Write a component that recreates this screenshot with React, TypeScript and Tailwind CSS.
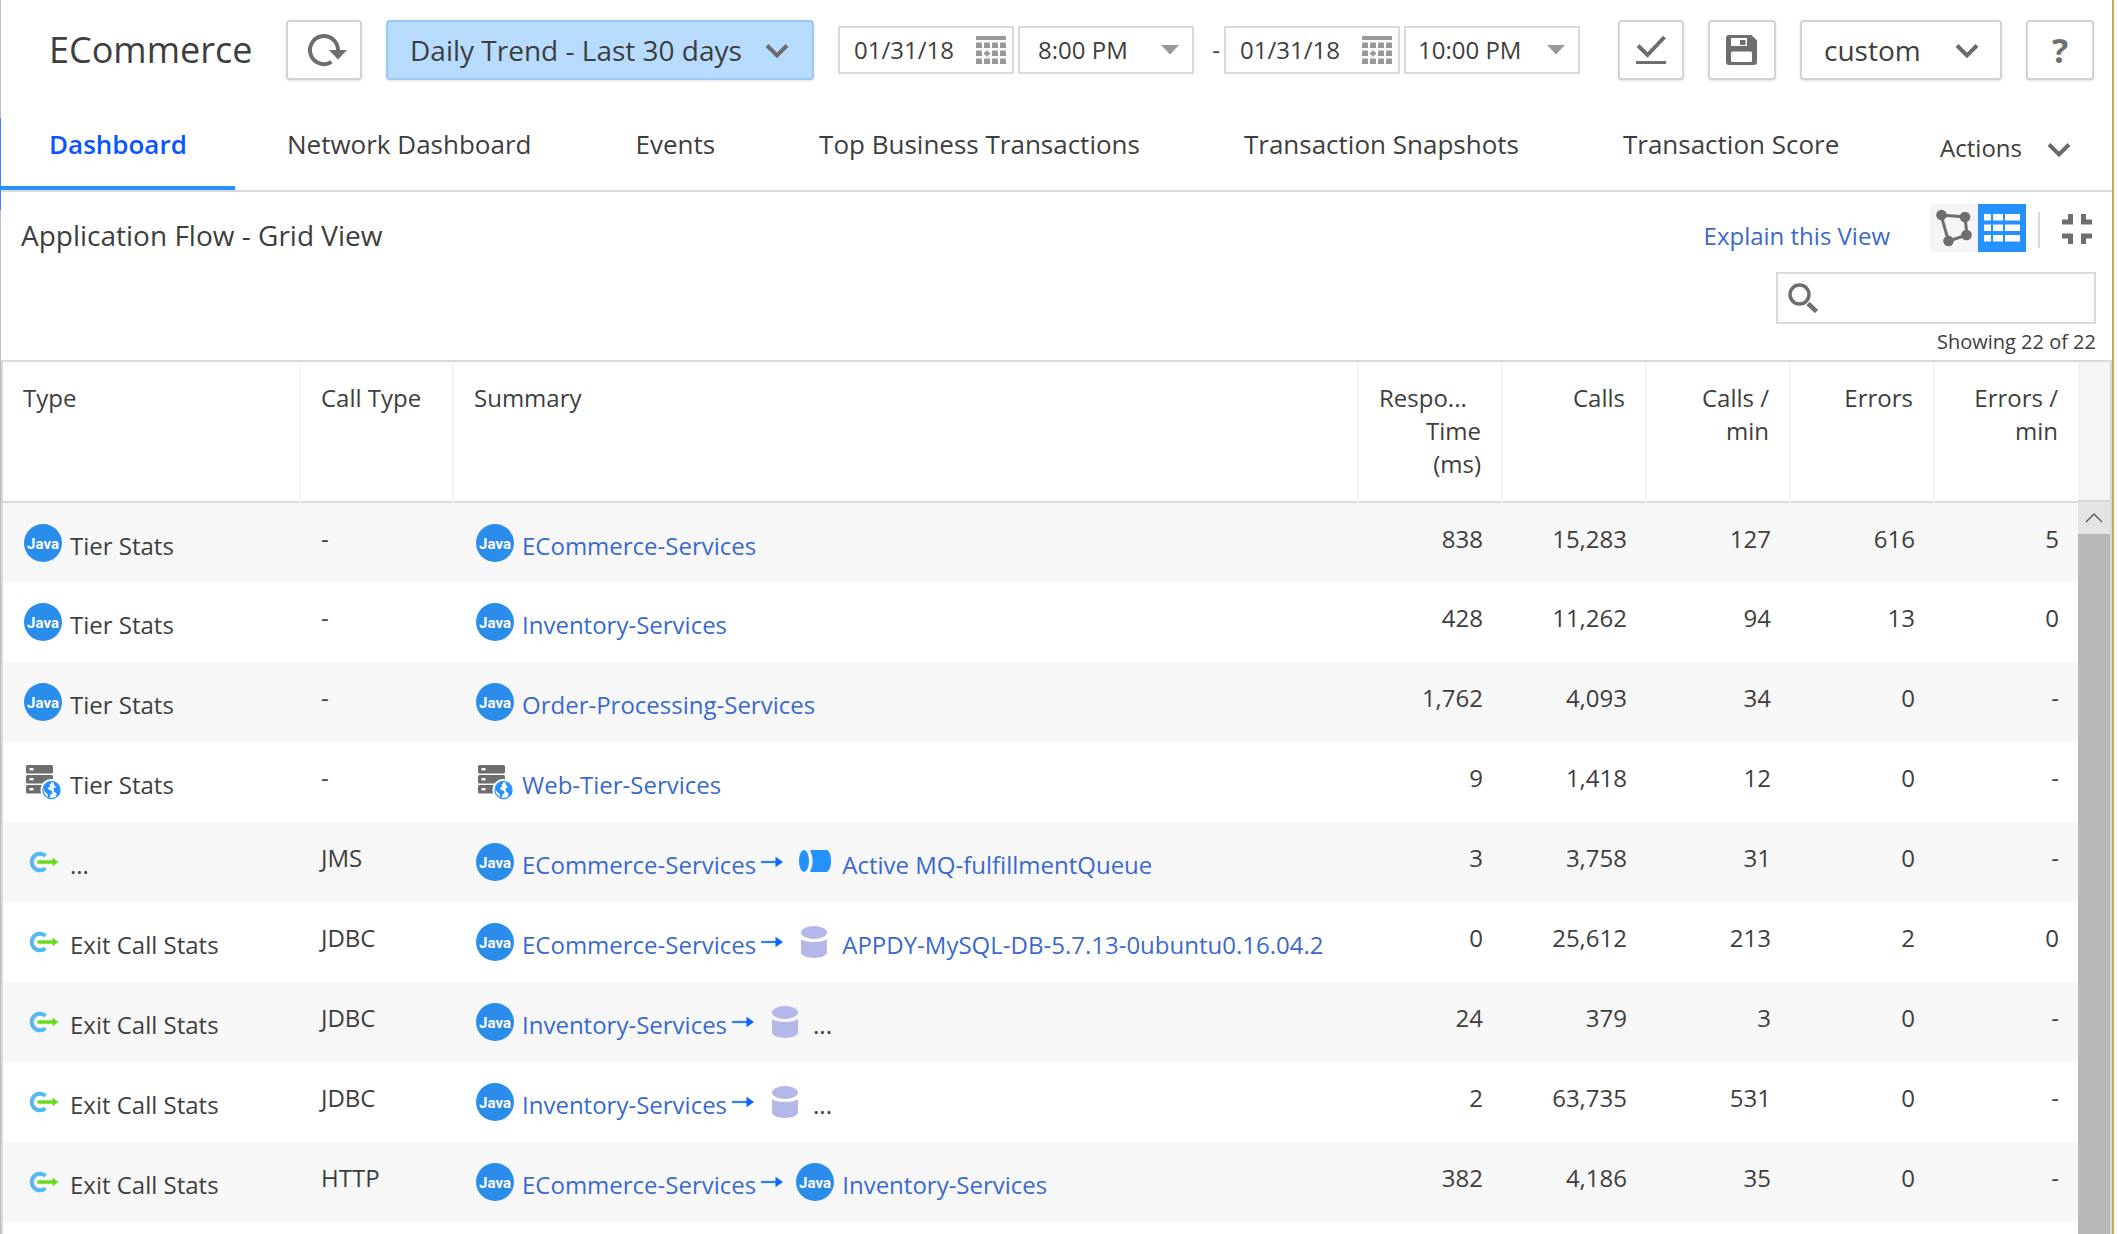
import React from "react";

type IconKind = "java" | "web" | "exit" | "queue" | "db";

function Chevron({ className = "" }: { className?: string }) {
  return (
    <svg width="24" height="16" viewBox="0 0 24 16" className={`pointer-events-none shrink-0 ${className}`} aria-hidden="true">
      <path d="M2 2.5 12 12.5 22 2.5" fill="none" stroke="#6b6b6b" strokeWidth="4" />
    </svg>
  );
}

function JavaIcon() {
  return (
    <svg width="38" height="38" viewBox="0 0 38 38" aria-hidden="true">
      <circle cx="19" cy="19" r="19" fill="#2a8dec" />
      <text x="19" y="25" textAnchor="middle" fontSize="15" fontWeight="700" fill="#fff" fontFamily="Roboto, sans-serif">
        Java
      </text>
    </svg>
  );
}

function WebIcon() {
  return (
    <svg width="38" height="38" viewBox="0 0 38 38" aria-hidden="true">
      <rect x="2" y="2" width="27" height="8.5" rx="1.5" fill="#6e6e6e" />
      <rect x="2" y="12" width="27" height="8.5" rx="1.5" fill="#6e6e6e" />
      <rect x="2" y="22" width="27" height="8.5" rx="1.5" fill="#6e6e6e" />
      <rect x="5.5" y="5" width="4" height="2.4" fill="#fff" />
      <rect x="5.5" y="15" width="4" height="2.4" fill="#fff" />
      <rect x="5.5" y="25" width="4" height="2.4" fill="#fff" />
      <circle cx="27.5" cy="27" r="11" fill="#fff" />
      <circle cx="27.5" cy="27" r="8.6" fill="#fff" stroke="#2491ff" strokeWidth="1.2" />
      <path d="M20 23.500C21.500 20.500 24 19 26.500 18.500L27.500 20 25.500 21.500 26.500 23 24 25 24.500 26.500 28 28 28.500 30 26.500 31.500 26 34.500 24 34.500 23.500 31 21 29 19.500 26z" fill="#2491ff" />
      <path d="M29.500 19C34 20 36.500 24 35.800 28.500 35.200 31 33.800 32.800 32 33.800L32.500 30.500 30 28.500 29.500 25.500 32 24 30 22z" fill="#2491ff" />
    </svg>
  );
}

function ExitIcon() {
  return (
    <svg width="38" height="38" viewBox="0 0 38 38" aria-hidden="true">
      <path d="M21.500 12.800A8.300 8.300 0 1 0 21.500 25.200" fill="none" stroke="#55b8ee" strokeWidth="4" />
      <path d="M13.500 17.200H28.500V14.800L34.500 19 28.500 23.200V20.800H13.500z" fill="#6bdc1c" />
    </svg>
  );
}

function QueueIcon() {
  return (
    <svg width="38" height="38" viewBox="0 0 38 38" aria-hidden="true">
      <ellipse cx="8" cy="18" rx="5" ry="11" fill="#2491ff" />
      <path d="M14 7H31C36.500 10 36.500 26 31 29H14C17.500 22 17.500 14 14 7z" fill="#2491ff" />
    </svg>
  );
}

function DbIcon() {
  return (
    <svg width="38" height="38" viewBox="0 0 38 38" aria-hidden="true">
      <ellipse cx="18" cy="9.500" rx="13" ry="6.500" fill="#b4b7e8" />
      <path d="M5 16C9 20 27 20 31 16V30C28 36.500 8 36.500 5 30z" fill="#b4b7e8" />
    </svg>
  );
}

const icons: Record<IconKind, () => React.ReactElement> = {
  java: JavaIcon,
  web: WebIcon,
  exit: ExitIcon,
  queue: QueueIcon,
  db: DbIcon,
};

function Entity({ kind, children }: { kind: IconKind; children: React.ReactNode }) {
  const Icon = icons[kind];
  return (
    <span className="flex items-start gap-2">
      <span className="mt-px shrink-0">
        <Icon />
      </span>
      <span className="pt-[6px]">{children}</span>
    </span>
  );
}

function EntityLink({ kind, name }: { kind: IconKind; name: string }) {
  return (
    <Entity kind={kind}>
      {name === "..." ? (
        name
      ) : (
        <a href="#" className="text-[#3b6acb]">
          {name}
        </a>
      )}
    </Entity>
  );
}

function CalendarIcon() {
  const cells = [0, 1, 2, 3].flatMap((c) => [0, 1, 2].map((r) => ({ c, r })));
  return (
    <svg width="30" height="28" viewBox="0 0 30 28" aria-hidden="true">
      <rect width="30" height="4" fill="#999" />
      {cells.map(({ c, r }) =>
        c === 1 && r === 1 ? (
          <path key="mark" d="M11 14.500V20.500M8 17.500H14" stroke="#999" strokeWidth="2.500" />
        ) : (
          <rect key={`${c}-${r}`} x={c * 8} y={6.5 + r * 8} width="6" height="5.500" fill="#999" />
        ),
      )}
    </svg>
  );
}

function DateField({ label, value }: { label: string; value: string }) {
  return (
    <div className="flex h-12 w-44 items-center justify-between border-2 border-[#d9d9d9] pr-[6px] pl-[14px]">
      <input aria-label={label} defaultValue={value} className="w-28 bg-transparent text-2xl outline-none" />
      <button aria-label={`Pick ${label}`}>
        <CalendarIcon />
      </button>
    </div>
  );
}

function TimeField({ label, value, pad }: { label: string; value: string; pad: string }) {
  return (
    <div className="relative">
      <select aria-label={label} defaultValue={value} className={`h-12 w-44 appearance-none border-2 border-[#d9d9d9] bg-white text-2xl ${pad}`}>
        <option>{value}</option>
      </select>
      <svg width="18" height="10" viewBox="0 0 18 10" className="pointer-events-none absolute top-[19px] right-[15px]" aria-hidden="true">
        <path d="M0 0H18L9 9.500z" fill="#999" />
      </svg>
    </div>
  );
}

const boxed = "flex h-[60px] items-center justify-center rounded-[4px] border-2 border-[#d0d4d9] bg-white shadow-sm";

const tabs = ["Network Dashboard", "Events", "Top Business Transactions", "Transaction Snapshots", "Transaction Score"];

interface Row {
  type: string;
  icon: IconKind;
  call: string;
  from: [IconKind, string];
  to?: [IconKind, string];
  values: string[];
}

const rows: Row[] = [
  { type: "Tier Stats", icon: "java", call: "-", from: ["java", "ECommerce-Services"], values: ["838", "15,283", "127", "616", "5"] },
  { type: "Tier Stats", icon: "java", call: "-", from: ["java", "Inventory-Services"], values: ["428", "11,262", "94", "13", "0"] },
  { type: "Tier Stats", icon: "java", call: "-", from: ["java", "Order-Processing-Services"], values: ["1,762", "4,093", "34", "0", "-"] },
  { type: "Tier Stats", icon: "web", call: "-", from: ["web", "Web-Tier-Services"], values: ["9", "1,418", "12", "0", "-"] },
  { type: "...", icon: "exit", call: "JMS", from: ["java", "ECommerce-Services"], to: ["queue", "Active MQ-fulfillmentQueue"], values: ["3", "3,758", "31", "0", "-"] },
  { type: "Exit Call Stats", icon: "exit", call: "JDBC", from: ["java", "ECommerce-Services"], to: ["db", "APPDY-MySQL-DB-5.7.13-0ubuntu0.16.04.2"], values: ["0", "25,612", "213", "2", "0"] },
  { type: "Exit Call Stats", icon: "exit", call: "JDBC", from: ["java", "Inventory-Services"], to: ["db", "..."], values: ["24", "379", "3", "0", "-"] },
  { type: "Exit Call Stats", icon: "exit", call: "JDBC", from: ["java", "Inventory-Services"], to: ["db", "..."], values: ["2", "63,735", "531", "0", "-"] },
  { type: "Exit Call Stats", icon: "exit", call: "HTTP", from: ["java", "ECommerce-Services"], to: ["java", "Inventory-Services"], values: ["382", "4,186", "35", "0", "-"] },
];

function Toolbar() {
  return (
    <header className="flex items-center pt-5 pr-[18px] pl-[48px]">
      <h1 className="w-[237px] text-4xl leading-[60px]">ECommerce</h1>
      <button aria-label="Refresh" className={`${boxed} w-[76px]`}>
        <svg width="46" height="36" viewBox="0 0 46 36" aria-hidden="true">
          <path d="M30.500 29.900A14 14 0 1 1 37 18" fill="none" stroke="#6e6e6e" strokeWidth="4" />
          <path d="M28 18H46L37 27.500z" fill="#6e6e6e" />
        </svg>
      </button>
      <div className="relative ml-6">
        <select aria-label="Time range" className="h-[60px] w-[428px] appearance-none rounded-[4px] border-2 border-[#9cc8f7] bg-[#b8dcff] pl-[22px] text-[28px] shadow-sm">
          <option>Daily Trend - Last 30 days</option>
        </select>
        <Chevron className="absolute top-[23px] right-[25px]" />
      </div>
      <div className="ml-6 flex items-center gap-1 text-2xl">
        <DateField label="start date" value="01/31/18" />
        <TimeField label="start time" value="8:00 PM" pad="pl-[18px]" />
        <span className="w-[22px] text-right">-</span>
        <DateField label="end date" value="01/31/18" />
        <TimeField label="end time" value="10:00 PM" pad="pl-[12px]" />
      </div>
      <div className="ml-auto flex items-center gap-6">
        <button aria-label="Apply" className={`${boxed} w-[66px]`}>
          <svg width="32" height="30" viewBox="0 0 32 30" aria-hidden="true">
            <path d="M3 10.500 12.500 20 29.500 2" fill="none" stroke="#6e6e6e" strokeWidth="4" />
            <path d="M1 27.500H31" stroke="#6e6e6e" strokeWidth="3" />
          </svg>
        </button>
        <button aria-label="Save" className={`${boxed} w-[68px]`}>
          <svg width="32" height="30" viewBox="0 0 32 30" aria-hidden="true">
            <path fillRule="evenodd" fill="#6e6e6e" d="M3 0H25.500L31 5.500V27Q31 30 28 30H3Q0 30 0 27V3Q0 0 3 0zM5 3V11H21V3zM6.500 16.500Q5 16.500 5 18V25.500Q5 27 6.500 27H24.500Q26 27 26 25.500V18Q26 16.500 24.500 16.500z" />
            <rect x="14" y="5" width="5.500" height="5" fill="#6e6e6e" />
          </svg>
        </button>
        <div className="relative">
          <select aria-label="Preset" className="h-[60px] w-[202px] appearance-none rounded-[4px] border-2 border-[#d0d4d9] bg-white pl-[22px] text-[28px] shadow-sm">
            <option>custom</option>
          </select>
          <Chevron className="absolute top-[23px] right-[23px]" />
        </div>
        <button aria-label="Help" className={`${boxed} w-[68px] text-[34px] font-bold text-[#6e6e6e]`}>
          ?
        </button>
      </div>
    </header>
  );
}

function Tabs() {
  return (
    <nav className="mt-[38px] flex h-[74px] items-stretch border-b-2 border-[#d9d9d9] text-[26px] leading-9">
      <a href="#" className="w-[234px] border-b-4 border-[#2491ff] pt-2 pl-[48px] font-semibold text-[#0a55ff]">
        Dashboard
      </a>
      {tabs.map((t) => (
        <a key={t} href="#" className="px-[52px] pt-2 whitespace-nowrap">
          {t}
        </a>
      ))}
      <button className="mr-[41px] ml-auto flex items-center gap-[25px] pb-3 text-2xl">
        Actions
        <Chevron className="mt-1" />
      </button>
    </nav>
  );
}

function ViewBar() {
  return (
    <section className="flex h-[168px] flex-col items-end pt-3 pr-[16px] pl-5">
      <div className="flex w-full items-start">
        <h2 className="mr-auto pt-3 text-[28px] leading-[38px]">Application Flow - Grid View</h2>
        <a href="#" className="pt-4 text-2xl text-[#3b6acb]">
          Explain this View
        </a>
        <button aria-label="Flow view" className="ml-10 flex size-12 items-center justify-center bg-[#f4f5f7]">
          <svg width="36" height="38" viewBox="0 0 36 38" aria-hidden="true">
            <path d="M5 6 29 8 31 26 12.500 32z" fill="none" stroke="#6e6e6e" strokeWidth="3" />
            <g fill="#6e6e6e">
              <circle cx="5.500" cy="6" r="5.300" />
              <circle cx="29" cy="8" r="5.300" />
              <circle cx="30.500" cy="26" r="5.300" />
              <circle cx="12.500" cy="32" r="5.300" />
            </g>
          </svg>
        </button>
        <button aria-label="Grid view" className="flex size-12 items-center justify-center bg-[#2491ff]">
          <svg width="36" height="28" viewBox="0 0 36 28" fill="#fff" aria-hidden="true">
            {[0, 10.5, 21].map((y) => (
              <g key={y}>
                <rect x="0" y={y} width="7" height="6.500" />
                <rect x="9" y={y} width="10" height="6.500" />
                <rect x="21" y={y} width="15" height="6.500" />
              </g>
            ))}
          </svg>
        </button>
        <span className="mt-2 ml-3 h-9 w-0.5 bg-[#d9d9d9]" />
        <button aria-label="Exit full screen" className="mt-[10px] mr-1 ml-[22px]">
          <svg width="30" height="30" viewBox="0 0 30 30" fill="none" stroke="#6e6e6e" strokeWidth="5" aria-hidden="true">
            <path d="M8.500 0V8H0M21.500 0V8H30M0 22H8.500V30M30 22H21.500V30" />
          </svg>
        </button>
      </div>
      <label className="mt-[18px] flex h-[52px] w-[320px] items-center border-2 border-[#d9d9d9] px-[10px]">
        <svg width="30" height="30" viewBox="0 0 30 30" fill="none" stroke="#6e6e6e" className="shrink-0" aria-hidden="true">
          <circle cx="11.500" cy="11.500" r="9.500" strokeWidth="3.500" />
          <path d="M20 20.500 28.500 28.500" strokeWidth="4.500" />
        </svg>
        <input aria-label="Search" className="ml-2 w-full min-w-0 bg-transparent text-2xl outline-none" />
      </label>
      <p className="pt-1 text-xl">Showing 22 of 22</p>
    </section>
  );
}

const headCell = "border-r-2 border-[#f4f4f4] px-5 pt-[19px] align-top font-normal";

function Grid() {
  return (
    <section className="flex flex-1 border-t-2 border-r-2 border-l-2 border-[#d9d9d9]">
      <table className="w-full table-fixed self-start text-2xl leading-[33px]">
        <colgroup>
          <col className="w-[297px]" />
          <col className="w-[153px]" />
          <col />
          <col className="w-[144px]" />
          <col className="w-[144px]" />
          <col className="w-[144px]" />
          <col className="w-[144px]" />
          <col className="w-[144px]" />
        </colgroup>
        <thead>
          <tr className="h-[140px] border-b-2 border-[#d9d9d9] text-left">
            <th className={headCell}>Type</th>
            <th className={headCell}>Call Type</th>
            <th className={headCell}>Summary</th>
            <th className={`${headCell} text-right`}>
              <span className="block text-left">Respo...</span>
              Time (ms)
            </th>
            <th className={`${headCell} text-right`}>Calls</th>
            <th className={`${headCell} text-right`}>Calls / min</th>
            <th className={`${headCell} text-right`}>Errors</th>
            <th className="px-5 pt-[19px] text-right align-top font-normal">Errors / min</th>
          </tr>
        </thead>
        <tbody>
          {rows.map((row, i) => (
            <tr key={i} className="h-20 align-top odd:bg-[#f7f7f7]">
              <td className="px-[21px] pt-5">
                <Entity kind={row.icon}>{row.type}</Entity>
              </td>
              <td className="px-[21px] pt-[19px]">{row.call}</td>
              <td className="pt-5 pl-[23px]">
                <span className="flex items-start whitespace-nowrap">
                  <EntityLink kind={row.from[0]} name={row.from[1]} />
                  {row.to && (
                    <>
                      <svg width="24" height="12" viewBox="0 0 24 12" className="mt-[14px] mr-[12px] ml-1 shrink-0" aria-label="to">
                        <path d="M1 6H17" stroke="#2b82ff" strokeWidth="2.200" />
                        <path d="M15.500 .8 23 6 15.500 11.200z" fill="#0a68ff" />
                      </svg>
                      <EntityLink kind={row.to[0]} name={row.to[1]} />
                    </>
                  )}
                </span>
              </td>
              {row.values.map((v, j) => (
                <td key={j} className="pt-[19px] pr-[19px] text-right">
                  {v}
                </td>
              ))}
            </tr>
          ))}
        </tbody>
      </table>
      <div className="flex w-8 shrink-0 flex-col" aria-hidden="true">
        <div className="h-[140px] border-b-2 border-[#d9d9d9] bg-[#f4f4f4]" />
        <div className="flex h-8 items-center justify-center bg-[#e4e4e4]">
          <svg width="18" height="10" viewBox="0 0 18 10">
            <path d="M1 9 9 1 17 9" fill="none" stroke="#555" strokeWidth="1.300" />
          </svg>
        </div>
        <div className="flex-1 bg-[#b8b8b8]" />
      </div>
    </section>
  );
}

export default function App() {
  return (
    <div className="bg-white pr-1">
      <main className="relative flex min-h-screen flex-col border-r-2 border-l border-r-[#d0a94c] border-l-[#bdbdbd] font-['Open_Sans',sans-serif] text-[#3e3e3e]">
        <div className="absolute top-[118px] -left-px h-[92px] w-px bg-[#3d85ff]" />
        <Toolbar />
        <Tabs />
        <ViewBar />
        <Grid />
      </main>
    </div>
  );
}
